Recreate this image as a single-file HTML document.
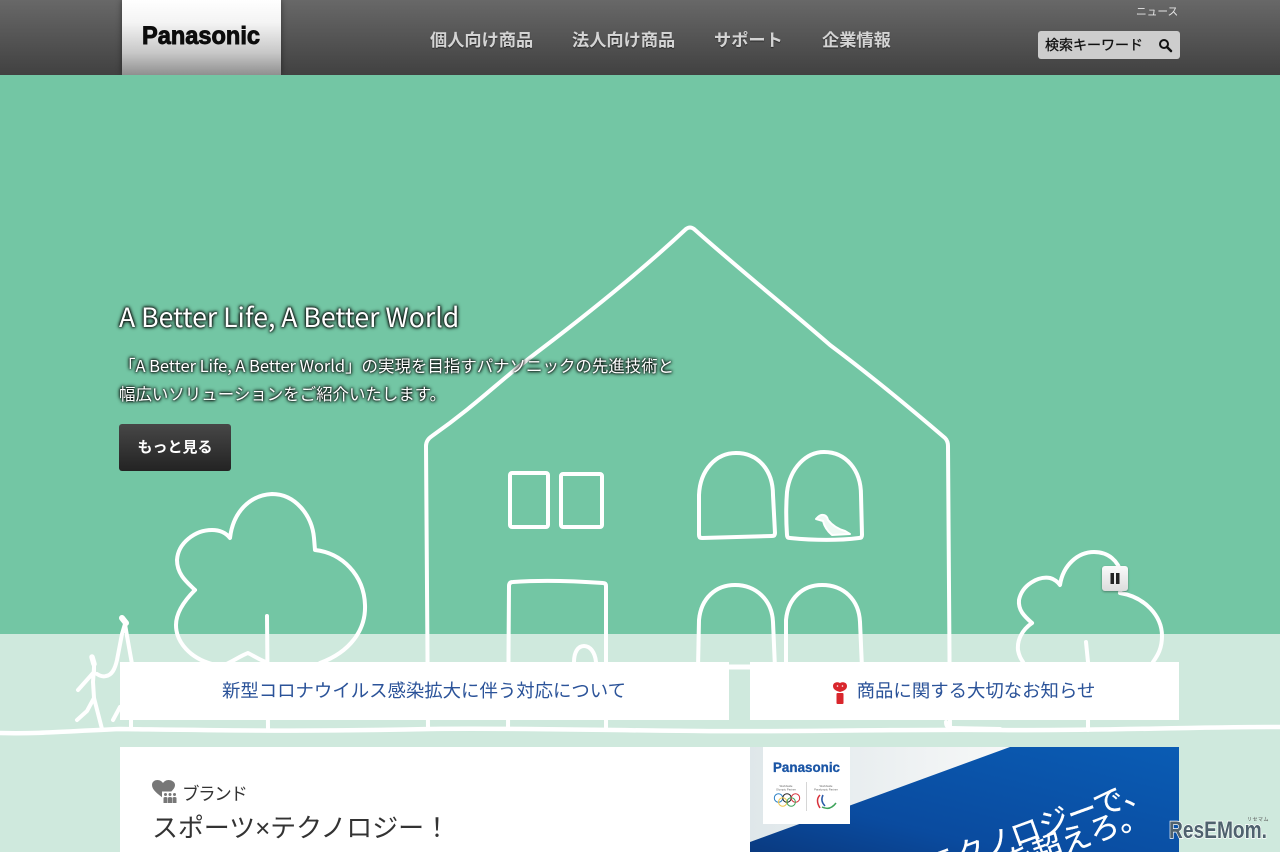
<!DOCTYPE html>
<html lang="ja">
<head>
<meta charset="utf-8">
<title>Panasonic</title>
<style>
html,body{margin:0;padding:0;width:1280px;height:852px;overflow:hidden;background:#cfe9dd}
body{position:relative;font-family:"Liberation Sans","Noto Sans CJK JP",sans-serif}
.abs{position:absolute;white-space:nowrap}
#hdr{position:absolute;left:0;top:0;width:1280px;height:75px;background:linear-gradient(#686868,#414141)}
#logo{position:absolute;left:122px;top:0;width:159px;height:75px;background:linear-gradient(#fff 0%,#f4f4f4 30%,#c8c8c8 70%,#8f8f8f 100%);box-shadow:0 0 6px rgba(0,0,0,.45)}
.nav{position:absolute;top:28px;font-size:17.200px;line-height:24px;font-weight:700;color:#d4d4d4;text-shadow:0 1px 1px rgba(0,0,0,.5);white-space:nowrap}
#hero{position:absolute;left:0;top:75px;width:1280px;height:559px;background:#73c6a4}
#band{position:absolute;left:0;top:634px;width:1280px;height:218px;background:#cfe9dd}
#draw{position:absolute;left:0;top:0}
.sh{color:#fff;text-shadow:0 0 4px #000,0 0 3px #000,0 0 2px rgba(0,0,0,.8)}
.noto{font-family:"Noto Sans CJK JP",sans-serif}
.card{position:absolute;top:662px;height:58px;background:#fff;color:#2b5399;font-size:18.400px;line-height:57px;text-align:center;white-space:nowrap;font-family:"Noto Sans CJK JP",sans-serif;font-weight:400}
</style>
</head>
<body>
<div id="hdr"></div>
<div id="logo"></div>
<svg class="abs" style="left:122px;top:0" width="159" height="75"><text x="20" y="44" font-family="Liberation Sans" font-size="25" font-weight="700" fill="#0c0c0c" stroke="#0c0c0c" stroke-width=".9" textLength="118" lengthAdjust="spacingAndGlyphs">Panasonic</text></svg>
<div class="nav" style="left:430px">個人向け商品</div>
<div class="nav" style="left:572px">法人向け商品</div>
<div class="nav" style="left:714px">サポート</div>
<div class="nav" style="left:822px">企業情報</div>
<div class="abs" style="left:1136px;top:5px;font-size:10.700px;line-height:14px;color:#e6e6e6">ニュース</div>
<div class="abs" style="left:1038px;top:31px;width:142px;height:28px;background:#cdcdcd;border-radius:3px"></div>
<div class="abs" style="left:1045px;top:35px;font-size:14px;line-height:20px;color:#111;-webkit-text-stroke:.3px #111">検索キーワード</div>
<svg class="abs" style="left:1158px;top:38px" width="15" height="15"><circle cx="6" cy="6" r="4" fill="none" stroke="#111" stroke-width="2"/><path d="M9 9L13 13" stroke="#111" stroke-width="2.500" stroke-linecap="round"/></svg>

<div id="hero"></div>
<div id="band"></div>

<svg id="draw" width="1280" height="852" fill="none" stroke="#fff" stroke-width="4" stroke-linecap="round" stroke-linejoin="round">
<path stroke-width="4.500" d="M0 733C40 734 70 731 120 729C200 730 300 732 430 729C520 728 580 730 700 731C800 732 900 729 1000 730C1100 731 1180 727 1280 727"/>
<path d="M428 728L426 446Q426 440 432 436C480 402 500 380 540 350C590 312 640 272 686 229Q690 226 694 229C740 270 790 310 830 345C870 375 910 408 945 438Q948 441 948 446L950 728"/>
<rect x="510" y="473" width="38" height="54" rx="2"/>
<rect x="561" y="474" width="41" height="53" rx="2"/>
<path d="M702 538Q699 538 699 535L699 495C700 470 716 453 736 453C758 453 773 470 773 495L775 533Q775 536 772 536Z"/>
<path d="M790 538Q787 538 787 535C786 520 786 505 787 492C790 468 806 452 824 452C846 452 861 470 861 495L862 535Q862 538 859 538C835 541 810 540 790 538Z"/>
<path stroke-width="2" d="M818 517C822 513 827 515 828 520C832 525 838 529 845 531L850 534L832 535C826 530 824 525 823 521L816 519Z" fill="#eefaf4"/>
<path d="M508 728L509 586Q509 582 513 582C540 580 575 581 603 583Q606 583 606 586L606 728"/>
<path d="M574 662C574 652 578 646 584 646C590 646 595 652 596 662"/>
<path d="M698 668L699 620C701 598 716 585 735 585C756 585 772 600 773 622L775 668"/>
<path d="M786 668L786 620C788 598 803 585 822 585C844 585 859 600 860 622L862 668"/>
<path stroke-width="5" d="M729 667L750 667"/>
<path d="M195 590C188 583 177 575 177 560C178 543 195 530 212 530C220 530 226 533 230 538C233 512 250 495 272 494C295 494 312 515 314 538L315 550C342 553 364 575 365 605C366 630 350 652 320 663"/>
<path d="M195 590C185 600 176 612 176 625C176 642 190 658 212 664"/>
<path d="M222 666C232 662 240 656 248 653C254 656 260 660 266 662"/>
<path d="M267 616L268 728"/>
<path stroke-width="6" d="M122 618L126 623"/>
<path stroke-width="4" d="M125 624L122 634L117 660C115 669 112 675 106 676C103 677 100 676 97 674"/>
<path stroke-width="4" d="M125 624L127 636L132 664M131 715L131 729M120 707L113 720"/>
<path stroke-width="5.500" d="M92 657L94 664"/>
<path stroke-width="4" d="M94 664L94 672L78 690M94 668L93 682L94 698L102 729M94 698L87 711L77 720"/>
<path d="M1032 623C1024 616 1018 610 1019 600C1022 585 1038 576 1050 578C1054 579 1058 582 1060 585C1063 565 1078 552 1094 552C1108 552 1118 560 1122 575"/>
<path d="M1122 575L1120 593C1145 597 1162 616 1162 636C1162 648 1158 655 1153 662"/>
<path d="M1032 623C1022 630 1017 640 1018 650C1019 656 1021 659 1023 662"/>
<path d="M1086 642L1088 662M1088 720L1088 730"/>
<path d="M946 722Q946 728 952 728L1000 729"/>
</svg>

<div class="abs noto sh" style="left:119px;top:298px;font-size:26.600px;line-height:36px">A Better Life, A Better World</div>
<div class="abs noto sh" style="left:119px;top:351px;font-size:16.500px;line-height:28px;letter-spacing:-.05px">「A Better Life, A Better World」の実現を目指すパナソニックの先進技術と<br>幅広いソリューションをご紹介いたします。</div>
<div class="abs" style="left:119px;top:424px;width:112px;height:47px;border-radius:3px;background:linear-gradient(#474747,#232323);color:#fff;font-size:15px;font-weight:700;line-height:46px;text-align:center;font-family:'Noto Sans CJK JP',sans-serif">もっと見る</div>

<div class="abs" style="left:1102px;top:566px;width:26px;height:25px;border-radius:3px;background:linear-gradient(#fafafa,#dcdcdc);box-shadow:0 1px 2px rgba(0,0,0,.35)"></div>
<svg class="abs" style="left:1102px;top:566px" width="26" height="25"><rect x="8.500" y="7" width="3.500" height="11" fill="#222"/><rect x="14" y="7" width="3.500" height="11" fill="#222"/></svg>

<div class="card" style="left:120px;width:609px;text-indent:-1px">新型コロナウイルス感染拡大に伴う対応について</div>
<div class="card" style="left:750px;width:429px;text-indent:23px">商品に関する大切なお知らせ</div>
<svg class="abs" style="left:832px;top:681px" width="16" height="24"><path d="M8 2C10 .5 15 1 15 5C15 9 11 10 8 11C5 10 1 9 1 5C1 1 6 .5 8 2Z" fill="#d9262c"/><circle cx="5.500" cy="5" r=".8" fill="#fff"/><circle cx="10.500" cy="5" r=".8" fill="#fff"/><rect x="4.500" y="12" width="7" height="11" rx="1" fill="#d9262c"/></svg>

<div class="abs" style="left:120px;top:747px;width:630px;height:105px;background:#fff"></div>
<svg class="abs" style="left:150px;top:778px" width="30" height="28"><path d="M13 20C8 16 2 12 2 7C2 3.500 5 2 7.500 2C10 2 12 3.500 13 5C14 3.500 16 2 18.500 2C21 2 25 3.500 25 7C25 12 18 16 13 20Z" fill="#777"/><rect x="12" y="13.500" width="16" height="13" fill="#fff"/><g fill="#777"><circle cx="15.500" cy="16.500" r="1.500"/><circle cx="20" cy="16.500" r="1.500"/><circle cx="24.500" cy="16.500" r="1.500"/><path d="M13.500 25V20Q13.500 19 15.500 19Q17.500 19 17.500 20V25ZM18 25V20Q18 19 20 19Q22 19 22 20V25ZM22.500 25V20Q22.500 19 24.500 19Q26.500 19 26.500 20V25Z"/></g></svg>
<div class="abs noto" style="left:182px;top:782px;font-size:17.500px;line-height:24px;color:#333;letter-spacing:-1.400px">ブランド</div>
<div class="abs" style="left:152px;top:810px;font-size:26px;line-height:36px;color:#333;letter-spacing:-.1px;font-family:'Liberation Sans','Noto Sans CJK JP',sans-serif">スポーツ×テクノロジー！</div>

<div class="abs" style="left:750px;top:747px;width:429px;height:105px;overflow:hidden;background:linear-gradient(90deg,#dfe7ea,#f7f8f8 60%)">
<svg width="429" height="105" style="position:absolute;left:0;top:0">
<defs><linearGradient id="b" x1="0" y1="1" x2="1" y2="0"><stop offset="0" stop-color="#0a3a80"/><stop offset=".3" stop-color="#0a4b9f"/><stop offset="1" stop-color="#0a5cb4"/></linearGradient></defs>
<path d="M260 0L429 0L429 105L0 105L0 95Z" fill="url(#b)"/>
<rect x="13" y="0" width="87" height="77" fill="#fff"/>
<text x="23" y="25" font-family="Liberation Sans" font-size="13.500" font-weight="700" fill="#1a55a5" stroke="#1a55a5" stroke-width=".3" textLength="67" lengthAdjust="spacingAndGlyphs">Panasonic</text>
<text x="36" y="40" text-anchor="middle" font-family="Liberation Sans" font-size="2.800" fill="#666">Worldwide</text>
<text x="36" y="43.500" text-anchor="middle" font-family="Liberation Sans" font-size="2.800" fill="#666">Olympic Partner</text>
<text x="76" y="40" text-anchor="middle" font-family="Liberation Sans" font-size="2.800" fill="#666">Worldwide</text>
<text x="76" y="43.500" text-anchor="middle" font-family="Liberation Sans" font-size="2.800" fill="#666">Paralympic Partner</text>
<path d="M56.500 35V64" stroke="#ccc" stroke-width=".8"/>
<g fill="none" stroke-width="1"><circle cx="28.500" cy="51" r="4.200" stroke="#2a7fc4"/><circle cx="37" cy="51" r="4.200" stroke="#222"/><circle cx="45.500" cy="51" r="4.200" stroke="#d8323c"/><circle cx="32.700" cy="55" r="4.200" stroke="#efc64a"/><circle cx="41.200" cy="55" r="4.200" stroke="#3ea35a"/>
<path d="M70 48Q65 53 70 61" stroke="#d8323c" stroke-width="1.500"/><path d="M73 48Q70 54 75 59" stroke="#2a5aa8" stroke-width="1.500"/><path d="M72 60Q80 64 86 56" stroke="#3ea35a" stroke-width="1.500"/></g>
<text transform="translate(126,151) rotate(-20)" font-family="Noto Sans CJK JP" font-size="30" fill="#fff" stroke="#fff" stroke-width=".3">ツとテクノロジーで、</text>
<text transform="translate(259,127) rotate(-20)" font-family="Noto Sans CJK JP" font-size="30" fill="#fff" stroke="#fff" stroke-width=".3">を超えろ。</text>
</svg>
</div>

<svg class="abs" style="left:1165px;top:812px" width="110" height="34"><text x="4" y="26" font-family="Liberation Sans" font-weight="700" font-size="24" fill="#4f626e" stroke="#fff" stroke-width="1.500" paint-order="stroke" textLength="98" lengthAdjust="spacingAndGlyphs">ResEMom.</text></svg>
<div class="abs" style="left:1247px;top:817px;font-size:5px;line-height:6px;color:#555;letter-spacing:.5px">リセマム</div>
</body>
</html>
